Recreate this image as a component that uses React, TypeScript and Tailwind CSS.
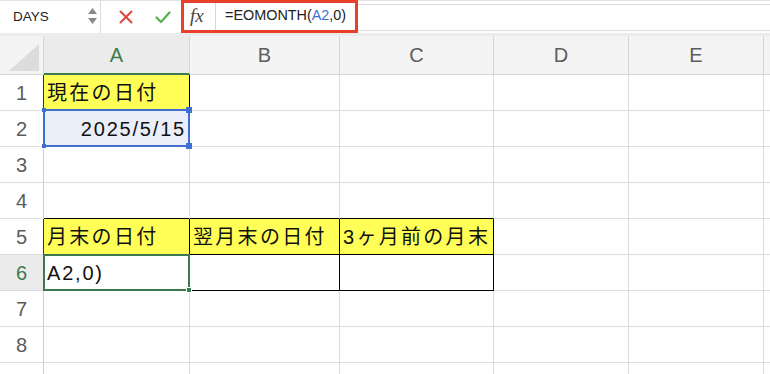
import React from 'react';

type Cell = {
  text?: string;
  yellow?: boolean;
  rightBlack?: boolean;
  bottomBlack?: boolean;
  alignRight?: boolean;
  sel?: 'blue' | 'green';
};

const COLS = ['A', 'B', 'C', 'D', 'E', ''];

const ROWS: Record<number, Record<number, Cell>> = {
  1: { 0: { text: '現在の日付', yellow: true, rightBlack: true, bottomBlack: true } },
  2: { 0: { text: '2025/5/15', alignRight: true, sel: 'blue' } },
  4: { 0: { bottomBlack: true }, 1: { bottomBlack: true }, 2: { bottomBlack: true } },
  5: {
    0: { text: '月末の日付', yellow: true, rightBlack: true, bottomBlack: true },
    1: { text: '翌月末の日付', yellow: true, rightBlack: true, bottomBlack: true },
    2: { text: '3ヶ月前の月末', yellow: true, rightBlack: true, bottomBlack: true },
  },
  6: {
    0: { text: 'A2,0)', sel: 'green', rightBlack: true, bottomBlack: true },
    1: { rightBlack: true, bottomBlack: true },
    2: { rightBlack: true, bottomBlack: true },
  },
};

const blackRowHeader = [1, 5, 6];

const font = { fontFamily: '"Liberation Sans", "Noto Sans CJK JP", sans-serif' };

const hasCjk = (s?: string) => !!s && /[\u3040-\u30ff\u4e00-\u9fff]/.test(s);

const Toolbar = () => (
  <div className="flex h-[36px] items-stretch bg-white border-t border-[#e2e2e2] border-b-[3px] border-b-[#ececec]">
    <div className="relative flex w-[101px] items-center border-r border-[#dadada] bg-white pl-[13px] text-[13.5px] text-[#222]">
      DAYS
      <div className="absolute right-[3px] top-[7px] flex flex-col items-center gap-[4px]">
        <svg width="9" height="6" viewBox="0 0 9 6"><path d="M4.5 0 L9 6 L0 6 Z" fill="#8a8a8a" /></svg>
        <svg width="9" height="6" viewBox="0 0 9 6"><path d="M0 0 L9 0 L4.5 6 Z" fill="#8a8a8a" /></svg>
      </div>
    </div>
    <div className="flex w-[80px] items-center pl-[18px] gap-[22px]">
      <svg width="14" height="14" viewBox="0 0 14 14">
        <path d="M1.5 1.5 L12.5 12.5 M12.5 1.5 L1.5 12.5" stroke="#e0443c" strokeWidth="2" strokeLinecap="round" />
      </svg>
      <svg width="16" height="13" viewBox="0 0 16 13">
        <path d="M1.5 6.5 L6 11 L14.5 1.5" stroke="#56b04c" strokeWidth="2.2" fill="none" strokeLinecap="round" strokeLinejoin="round" />
      </svg>
    </div>
    <div className="flex flex-1 items-center">
      <div className="flex h-[33px] w-[177px] items-center border-[3px] border-[#e8402b] -mt-[2px]">
        <span className="w-[31px] pl-[6px] text-[19px] italic text-[#444]" style={{ fontFamily: '"Liberation Serif", serif' }}>
          fx
        </span>
        <div className="flex h-full flex-1 items-center border-l border-[#d8d8d8] bg-white pl-[9px] text-[14.4px] text-[#222]">
          =EOMONTH(<span className="text-[#3c6fd1]">A2</span>,0)
        </div>
      </div>
      <div className="h-[27px] flex-1 border-y border-[#dcdcdc] bg-white" />
    </div>
  </div>
);

export default function App() {
  return (
    <div className="h-[374px] w-[770px] overflow-hidden bg-white" style={font}>
      <Toolbar />
      <div className="grid grid-cols-[44px_146px_150px_154px_135px_135px_1fr] grid-rows-[39px_repeat(9,36px)]">
        {/* header row */}
        <div className="relative border-r border-b border-[#d6d6d6] bg-[#f4f4f4]">
          <svg className="absolute bottom-[3px] right-[4px]" width="30" height="27" viewBox="0 0 30 27">
            <path d="M30 0 L30 27 L0 27 Z" fill="#dcdcdc" />
          </svg>
        </div>
        {COLS.map((c, i) => (
          <div
            key={c + i}
            className={
              i === 0
                ? 'flex items-center justify-center border-r border-[#d6d6d6] border-b-2 border-b-[#3a7a4e] bg-[#ebebeb] text-[20px] text-[#3a7a4e]'
                : 'flex items-center justify-center border-r border-b border-[#d6d6d6] bg-[#f4f4f4] text-[20px] text-[#5c5c5c]'
            }
          >
            {c}
          </div>
        ))}

        {Array.from({ length: 9 }, (_, ri) => {
          const r = ri + 1;
          const row = ROWS[r] || {};
          return (
            <React.Fragment key={r}>
              <div
                className={`flex items-center justify-center border-b border-[#dcdcdc] text-[20px] ${
                  blackRowHeader.includes(r) ? 'border-r border-r-[#333]' : 'border-r border-r-[#cfcfcf]'
                } ${r === 6 ? 'bg-[#ebebeb] text-[#3a7a4e]' : 'bg-white text-[#5c5c5c]'}`}
              >
                {r}
              </div>
              {COLS.map((_, ci) => {
                const cell: Cell = row[ci] || {};
                return (
                  <div
                    key={ci}
                    className={`relative flex items-center px-[3px] text-[20px] text-[#111] whitespace-nowrap border-r border-b ${
                      hasCjk(cell.text) ? 'tracking-[2.3px]' : 'tracking-[1.8px]'
                    } ${cell.rightBlack ? 'border-r-black' : 'border-r-[#dcdcdc]'} ${
                      cell.bottomBlack ? 'border-b-black' : 'border-b-[#dcdcdc]'
                    } ${cell.yellow ? 'bg-[#ffff57]' : cell.sel === 'blue' ? 'bg-[#e9eef9]' : 'bg-white'} ${
                      cell.alignRight ? 'justify-end' : ''
                    }`}
                  >
                    {cell.text}
                    {cell.sel === 'blue' && (
                      <div className="absolute -left-[1px] -top-[2px] -right-[1px] -bottom-[1px] z-10 border-2 border-[#3f6fcf]">
                        <div className="absolute -left-[3px] -top-[3px] h-[4px] w-[4px] bg-[#3f6fcf]" />
                        <div className="absolute -right-[4px] -top-[4px] h-[6px] w-[6px] bg-[#3f6fcf]" />
                        <div className="absolute -left-[3px] -bottom-[3px] h-[4px] w-[4px] bg-[#3f6fcf]" />
                        <div className="absolute -right-[4px] -bottom-[4px] h-[6px] w-[6px] bg-[#3f6fcf]" />
                      </div>
                    )}
                    {cell.sel === 'green' && (
                      <div className="absolute -left-[1px] -top-[1px] -right-[1px] -bottom-[1px] z-10 border-2 border-[#3a7a4e]">
                        <div className="absolute -right-[4px] -bottom-[4px] h-[6px] w-[6px] border border-white bg-[#3a7a4e]" />
                      </div>
                    )}
                  </div>
                );
              })}
            </React.Fragment>
          );
        })}
      </div>
    </div>
  );
}
